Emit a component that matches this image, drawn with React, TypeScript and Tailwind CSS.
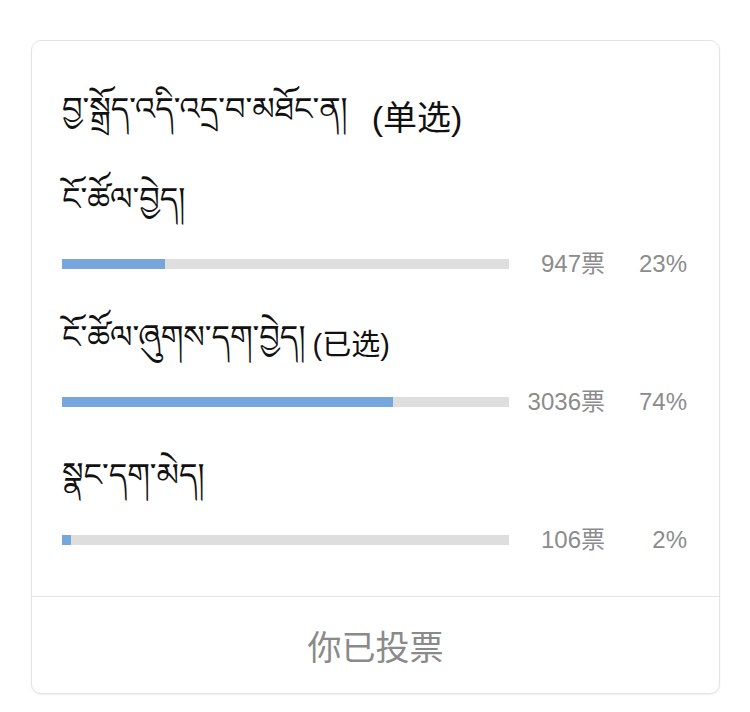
import React from "react";

type PollOption = {
  label: string;
  picked?: boolean;
  votes: number;
  percent: number;
};

const options: PollOption[] = [
  { label: "ངོ་ཚོལ་བྱེད།", votes: 947, percent: 23 },
  { label: "ངོ་ཚོལ་ཞུགས་དག་བྱེད།", picked: true, votes: 3036, percent: 74 },
  { label: "སྣང་དག་མེད།", votes: 106, percent: 2 },
];

const tibetan =
  "font-['Noto_Serif_Tibetan','Noto_Sans_Tibetan','Jomolhari','Noto_Sans','Noto_Sans_CJK_SC',sans-serif]";

const OptionRow: React.FC<{ data: PollOption }> = ({ data }) => {
  return (
    <div>
      <div className={`h-[48px] flex items-center text-[32px] text-[#111] ${tibetan}`}>
        {data.label}
        {data.picked && (
          <span className="ml-[7px] font-['Liberation_Sans','Noto_Sans_CJK_SC',sans-serif] text-[29px]">
            (已选)
          </span>
        )}
      </div>
      <div className="mt-[18px] h-[28px] flex items-center">
        <div className="flex-1 h-[10px] bg-[#dedede]">
          <div className="h-full bg-[#77a6dc]" style={{ width: `${data.percent}%` }} />
        </div>
        <span className="w-[96px] text-right text-[24px] text-[#8c8c8c] font-['Liberation_Sans','Noto_Sans_CJK_SC',sans-serif]">
          {data.votes}票
        </span>
        <span className="w-[82px] text-right text-[24px] text-[#8c8c8c] font-['Liberation_Sans','Noto_Sans_CJK_SC',sans-serif]">
          {data.percent}%
        </span>
      </div>
    </div>
  );
};

export default function App() {
  return (
    <div className="min-h-screen bg-white pt-[40px]">
      <section className="ml-[31px] w-[689px] bg-white border border-[#e4e4e4] rounded-[10px] shadow-[0_1px_2px_rgba(0,0,0,0.06)]">
        <div className="pl-[30px] pr-[32px] pt-[53px] pb-[42px] flex flex-col gap-[44px]">
          <h2 className={`h-[48px] -mb-[2px] flex items-center text-[32px] font-normal text-[#111] ${tibetan}`}>
            བྱ་སྒྲོད་འདི་འདྲ་བ་མཐོང་ན།
            <span className="ml-[24px] font-['Liberation_Sans','Noto_Sans_CJK_SC',sans-serif] text-[34px]">
              (单选)
            </span>
          </h2>
          {options.map((o) => (
            <OptionRow key={o.label} data={o} />
          ))}
        </div>
        <div className="h-[97px] border-t border-[#e4e4e4] flex items-center justify-center text-[34px] text-[#8a8a8a] font-['Noto_Sans_CJK_SC',sans-serif]">
          你已投票
        </div>
      </section>
    </div>
  );
}
